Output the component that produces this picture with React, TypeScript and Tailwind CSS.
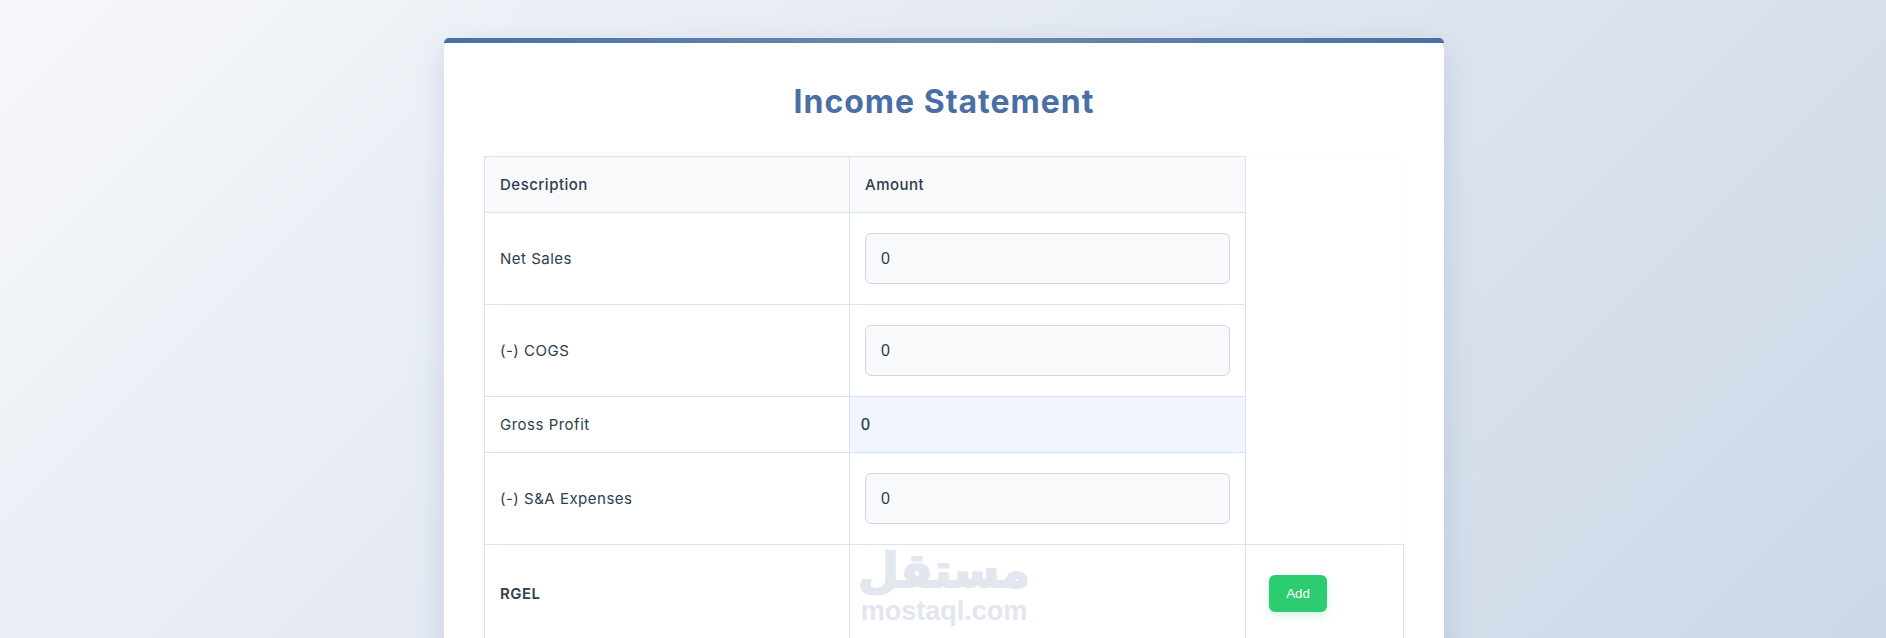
const cell = "border border-[#dbe2f0] px-[15px] pt-px";
const inputCell = "border border-[#dbe2f0] p-[15px]";

function AmountInput() {
  return (
    <input
      readOnly
      value="0"
      className="block h-[51px] w-full rounded-md border border-[#d0d8e6] bg-[#f8f9fb] px-[15px] font-['Liberation_Sans',sans-serif] text-[16px] text-[#2c3e50] outline-none"
    />
  );
}

export default function App() {
  return (
    <div className="flex h-screen justify-center overflow-hidden bg-[linear-gradient(135deg,#f5f7fa_0%,#c3cfe2_100%)] bg-size-[100%_1250px] bg-no-repeat pl-0.5 pt-[38px] font-['Inter',sans-serif]">
      <div className="relative h-fit w-[1000px] rounded-xl bg-white px-10 pb-10 pt-[43px] shadow-[0_10px_30px_rgba(74,111,165,0.2)]">
        <div className="absolute inset-x-0 top-0 h-[5px] rounded-t-xl bg-[linear-gradient(90deg,#4a6fa5,#6b8cae,#4a6fa5)]" />

        <h1 className="mb-[34px] h-[41px] text-center text-[32px] font-bold leading-[42px] tracking-[1px] text-[#4a6fa5]">
          Income Statement
        </h1>

        <table className="w-full table-fixed border-collapse bg-white text-[15px] tracking-[0.5px] text-[#2c3e50] shadow-[0_2px_10px_rgba(0,0,0,0.025)]">
          <colgroup>
            <col className="w-[365px]" />
            <col className="w-[396px]" />
            <col />
          </colgroup>
          <tbody>
            <tr className="h-14">
              <td className={`${cell} bg-[#f8f9fb] font-medium`}>Description</td>
              <td className={`${cell} bg-[#f8f9fb] font-medium`}>Amount</td>
            </tr>
            <tr className="h-[92px]">
              <td className={cell}>Net Sales</td>
              <td className={inputCell}><AmountInput /></td>
            </tr>
            <tr className="h-[92px]">
              <td className={cell}>(-) COGS</td>
              <td className={inputCell}><AmountInput /></td>
            </tr>
            <tr className="h-14">
              <td className={cell}>Gross Profit</td>
              <td className="border border-[#dbe2f0] bg-[#f1f6fe] px-[11px] font-['Liberation_Sans',sans-serif] text-[16px] [-webkit-text-stroke:0.3px_#2c3e50]">0</td>
            </tr>
            <tr className="h-[92px]">
              <td className={cell}>(-) S&amp;A Expenses</td>
              <td className={inputCell}><AmountInput /></td>
            </tr>
            <tr className="h-[98px]">
              <td className={`${cell} font-semibold`}>RGEL</td>
              <td className="border border-[#dbe2f0]"></td>
              <td className="border border-[#dbe2f0] pl-[23px]">
                <button className="h-[37px] w-[58px] rounded-md bg-[#2ecc71] font-['Liberation_Sans',sans-serif] text-[13.33px] tracking-normal text-white shadow-[0_4px_8px_rgba(46,204,113,0.2)]">
                  Add
                </button>
              </td>
            </tr>
          </tbody>
        </table>

        {/* watermark */}
        <div className="pointer-events-none absolute left-[416px] top-[504px] flex w-[168px] flex-col items-center text-[#e1e6ef]">
          <span className="font-['DejaVu_Sans',sans-serif] text-[47px] font-bold leading-[58px] [-webkit-text-stroke:2px_#e1e6ef]">مستقل</span>
          <span className="font-['Liberation_Sans',sans-serif] text-[27px] font-bold leading-[22px]">mostaql.com</span>
        </div>
      </div>
    </div>
  );
}
